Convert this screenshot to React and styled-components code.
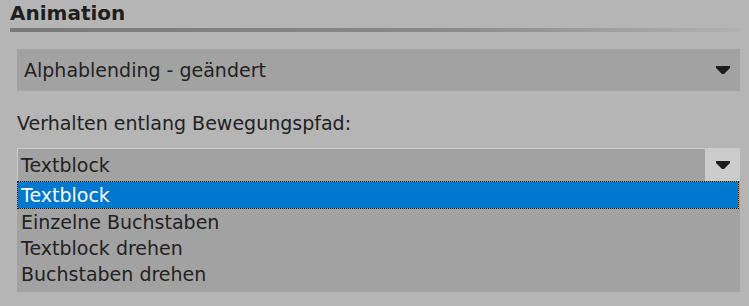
import React from "react";
import styled, { createGlobalStyle } from "styled-components";

const GlobalStyle = createGlobalStyle`
  html, body {
    margin: 0;
    padding: 0;
    background: #b5b5b5;
    font-family: "DejaVu Sans", "Liberation Sans", sans-serif;
    color: #222;
  }
`;

const Panel = styled.div`
  width: 749px;
  height: 306px;
  padding: 0 9px 0 10px;
  box-sizing: border-box;
  overflow: hidden;
`;

const Title = styled.h2`
  margin: 0;
  height: 28px;
  font-size: 20px;
  font-weight: bold;
  color: #1e1e1e;
  line-height: 26px;
`;

const Rule = styled.div`
  height: 4px;
  background: linear-gradient(to right, #797979 0%, #8a8a8a 60%, #b0b0b0 100%);
`;

const Body = styled.div`
  display: flex;
  flex-direction: column;
  padding: 17px 0 0 7px;
`;

const Select = styled.div`
  display: flex;
  align-items: center;
  height: ${(p) => p.$h}px;
  background: #a2a2a2;
  box-sizing: border-box;
  border: ${(p) => (p.$framed ? "1px solid #cbcbcb" : "none")};
  border-right: none;
  border-bottom: none;
  font-size: 19px;
`;

const SelectText = styled.span`
  flex: 1;
  padding-left: ${(p) => p.$pad}px;
`;

const ArrowBox = styled.div`
  width: 35px;
  align-self: stretch;
  display: flex;
  align-items: center;
  justify-content: center;
  background: ${(p) => (p.$light ? "#cccccc" : "transparent")};
`;

const Label = styled.div`
  font-size: 19px;
  margin: 20px 0 12px;
  line-height: 25px;
`;

const List = styled.div`
  display: flex;
  flex-direction: column;
  background: #a2a2a2;
  height: 111px;
`;

const Item = styled.div`
  height: 26px;
  line-height: 26px;
  font-size: 19px;
  padding-left: 4px;
  box-sizing: border-box;
  ${(p) =>
    p.$selected &&
    `
    height: 28px;
    line-height: 26px;
    background: #0078d0;
    color: #fff;
    border: 1px solid #f08a30;
    outline: 1px dotted #111;
    outline-offset: -1px;
    padding-left: 3px;
    margin-right: 1px;
  `}
`;

const Arrow = () => (
  <svg width="16" height="10" viewBox="0 0 16 10">
    <path d="M1 1 H15 V3 L9 9 H7 L1 3 Z" fill="#1c1c1c" />
  </svg>
);

export default function App() {
  const items = ["Textblock", "Einzelne Buchstaben", "Textblock drehen", "Buchstaben drehen"];
  return (
    <>
      <GlobalStyle />
      <Panel>
        <Title>Animation</Title>
        <Rule />
        <Body>
          <Select $h={42}>
            <SelectText $pad={7}>Alphablending - geändert</SelectText>
            <ArrowBox>
              <Arrow />
            </ArrowBox>
          </Select>
          <Label>Verhalten entlang Bewegungspfad:</Label>
          <Select $h={33} $framed>
            <SelectText $pad={3}>Textblock</SelectText>
            <ArrowBox $light>
              <Arrow />
            </ArrowBox>
          </Select>
          <List>
            {items.map((t, i) => (
              <Item key={t} $selected={i === 0}>
                {t}
              </Item>
            ))}
          </List>
        </Body>
      </Panel>
    </>
  );
}
